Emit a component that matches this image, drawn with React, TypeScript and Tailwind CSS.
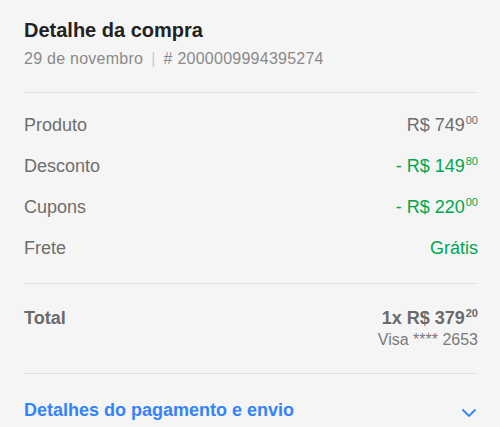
import React from "react";

const font = { fontFamily: '"Liberation Sans", Arial, sans-serif' };

function Price({ value, cents, className = "" }: { value: string; cents: string; className?: string }) {
  return (
    <span className={className}>
      {value}
      <span className="relative -top-[7px] ml-px text-[11px] leading-none">{cents}</span>
    </span>
  );
}

const rows = [
  { label: "Produto", value: "R$ 749", cents: "00", green: false },
  { label: "Desconto", value: "- R$ 149", cents: "80", green: true },
  { label: "Cupons", value: "- R$ 220", cents: "00", green: true },
];

export default function App() {
  return (
    <div className="min-h-[427px] w-[500px] bg-[#f5f5f5]" style={font}>
      <div className="pl-6 pr-[22px] pt-[18px]">
        {/* Header */}
        <h1 className="text-[20px] font-semibold leading-[25px] text-[#222]">Detalhe da compra</h1>
        <div className="mt-[6px] flex items-center text-[16px] leading-[20px] tracking-[0.25px] text-[#8a8a8a]">
          <span>29 de novembro</span>
          <span className="mx-[8px] text-[#d3c6c6]">|</span>
          <span># 2000009994395274</span>
        </div>

        <div className="mt-[23px] border-t border-[#e1e1e1]" />

        {/* Summary rows */}
        <div className="flex flex-col gap-[17px] pt-5 pb-[23px] text-[18px] leading-[24px]">
          {rows.map((r) => (
            <div key={r.label} className="flex items-center justify-between">
              <span className="text-[#6e6e6e]">{r.label}</span>
              <Price
                value={r.value}
                cents={r.cents}
                className={r.green ? "text-[#00a650]" : "text-[#6e6e6e]"}
              />
            </div>
          ))}
          <div className="flex items-center justify-between">
            <span className="text-[#6e6e6e]">Frete</span>
            <span className="text-[#00a650]">Grátis</span>
          </div>
        </div>

        <div className="border-t border-[#e1e1e1]" />

        {/* Total */}
        <div className="flex justify-between pt-[22px] pb-[23px]">
          <span className="text-[18px] font-semibold leading-[24px] text-[#6a6a6a]">Total</span>
          <div className="flex flex-col items-end">
            <Price
              value="1x R$ 379"
              cents="20"
              className="text-[18px] font-semibold leading-[24px] text-[#6a6a6a]"
            />
            <span className="text-[16px] leading-[20px] text-[#7a7a7a]">Visa **** 2653</span>
          </div>
        </div>

        <div className="border-t border-[#e1e1e1]" />

        {/* Footer link */}
        <button className="flex w-full items-center justify-between pt-6 text-left">
          <span className="text-[18px] font-semibold leading-[24px] text-[#3483fa]">
            Detalhes do pagamento e envio
          </span>
          <svg width="16" height="10" viewBox="0 0 16 10" fill="none" className="mr-px mt-[6px]">
            <polyline points="1.5,1.5 8,8 14.5,1.5" stroke="#3483fa" strokeWidth="1.8" />
          </svg>
        </button>
      </div>
    </div>
  );
}
